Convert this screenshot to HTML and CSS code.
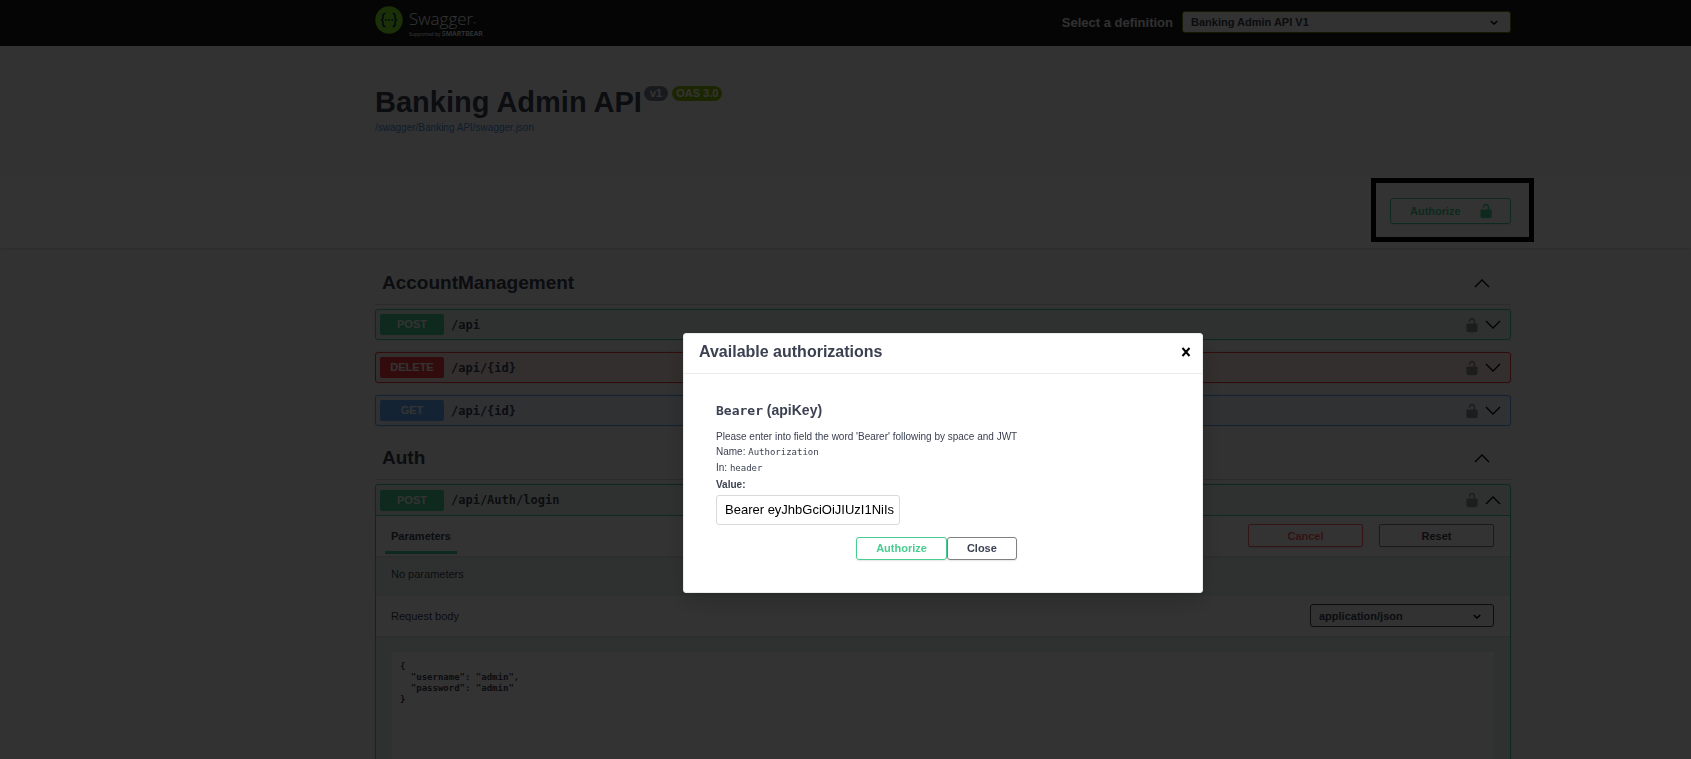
FILE: index.html
```html
<!DOCTYPE html>
<html lang="en">
<head>
<meta charset="utf-8">
<title>Swagger UI</title>
<link rel="stylesheet" href="styles.css">
</head>
<body>
<svg class="sprite" aria-hidden="true">
  <symbol id="unlocked" viewBox="0 0 20 20"><path d="M15.8 8H14V5.6C14 2.703 12.665 1 10 1 7.334 1 6 2.703 6 5.6V6h2v-.801C8 3.754 8.797 3 10 3c1.203 0 2 .754 2 2.199V8H4c-.553 0-1 .646-1 1.199V17c0 .549.428 1.139.951 1.307l1.197.387C5.672 18.861 6.55 19 7.1 19h5.8c.549 0 1.428-.139 1.951-.307l1.196-.387c.524-.167.953-.757.953-1.306V9.199C17 8.646 16.352 8 15.8 8z"/></symbol>
  <symbol id="down" viewBox="0 0 16 9"><path d="M1 1l7 7 7-7" fill="none" stroke="currentColor" stroke-width="1.3"/></symbol>
  <symbol id="up" viewBox="0 0 16 9"><path d="M1 8l7-7 7 7" fill="none" stroke="currentColor" stroke-width="1.3"/></symbol>
  <symbol id="caret" viewBox="0 0 10 6"><path d="M1 1l4 4 4-4" fill="none" stroke="currentColor" stroke-width="1.8"/></symbol>
</svg>

<header class="topbar">
  <div class="wrap topbar-row">
    <a class="logo" href="#">
      <svg class="logo-mark" viewBox="0 0 28 28" aria-hidden="true">
        <circle cx="14" cy="14" r="13.7" fill="#85ea2d"/>
        <path d="M10.5 7.5c-2 0-2.600.7-2.600 2.300v2c0 1.400-.6 2.200-2 2.200 1.400 0 2 .8 2 2.200v2c0 1.600.6 2.300 2.600 2.300M17.500 7.500c2 0 2.600.7 2.600 2.300v2c0 1.400.6 2.200 2 2.200-1.400 0-2 .8-2 2.200v2c0 1.600-.6 2.300-2.600 2.300" fill="none" stroke="#173647" stroke-width="1.700"/>
        <circle cx="10.700" cy="14" r="1" fill="#173647"/><circle cx="14" cy="14" r="1" fill="#173647"/><circle cx="17.300" cy="14" r="1" fill="#173647"/>
      </svg>
      <span class="logo-text">
        <span class="logo-name">Swagger<small>™</small></span>
        <span class="logo-by">Supported by <b>SMARTBEAR</b></span>
      </span>
    </a>
    <label class="definition-label" for="definition">Select a definition</label>
    <span class="select definition">
      <select id="definition"><option>Banking Admin API V1</option></select>
      <svg class="caret"><use href="#caret"/></svg>
    </span>
  </div>
</header>

<section class="info">
  <div class="wrap">
    <h1>Banking Admin API <span class="badges"><span class="badge">v1</span><span class="badge oas">OAS 3.0</span></span></h1>
    <a class="spec-link" href="#">/swagger/Banking API/swagger.json</a>
  </div>
</section>

<section class="schemes">
  <div class="wrap schemes-row">
    <button class="btn authorize">Authorize<svg class="lock"><use href="#unlocked"/></svg></button>
  </div>
</section>

<main>
  <div class="wrap">
  <section class="tag">
    <h2>AccountManagement<svg class="chevron"><use href="#up"/></svg></h2>
    <div class="op post"><div class="op-head"><span class="method">POST</span><code>/api</code><svg class="lock"><use href="#unlocked"/></svg><svg class="chevron"><use href="#down"/></svg></div></div>
    <div class="op delete"><div class="op-head"><span class="method">DELETE</span><code>/api/{id}</code><svg class="lock"><use href="#unlocked"/></svg><svg class="chevron"><use href="#down"/></svg></div></div>
    <div class="op get"><div class="op-head"><span class="method">GET</span><code>/api/{id}</code><svg class="lock"><use href="#unlocked"/></svg><svg class="chevron"><use href="#down"/></svg></div></div>
  </section>
  <section class="tag">
    <h2>Auth<svg class="chevron"><use href="#up"/></svg></h2>
    <div class="op post open">
      <div class="op-head"><span class="method">POST</span><code>/api/Auth/login</code><svg class="lock"><use href="#unlocked"/></svg><svg class="chevron"><use href="#up"/></svg></div>
      <div class="bar">
        <h3 class="tab">Parameters</h3>
        <button class="btn wide cancel">Cancel</button>
        <button class="btn wide reset">Reset</button>
      </div>
      <p class="no-params">No parameters</p>
      <div class="bar">
        <label class="body-label" for="content-type">Request body</label>
        <span class="select content-type">
          <select id="content-type"><option>application/json</option></select>
          <svg class="caret"><use href="#caret"/></svg>
        </span>
      </div>
      <div class="body-area">
        <textarea class="body-text" aria-label="Request body content" spellcheck="false">{
  "username": "admin",
  "password": "admin"
}</textarea>
      </div>
    </div>
  </section>
  </div>
</main>

<div class="highlight"></div>

<div class="backdrop">
  <div class="modal" role="dialog" aria-labelledby="modal-title">
    <div class="modal-head">
      <h3 id="modal-title">Available authorizations</h3>
      <button class="close" aria-label="Close dialog"><svg viewBox="0 0 10 10"><path d="M1.500 1l7 8M8.500 1l-7 8" stroke="#000" stroke-width="2"/></svg></button>
    </div>
    <form class="modal-body">
      <h4><code>Bearer</code> (apiKey)</h4>
      <p>Please enter into field the word 'Bearer' following by space and JWT</p>
      <p>Name: <code>Authorization</code></p>
      <p>In: <code>header</code></p>
      <label for="token">Value:</label>
      <input id="token" type="text" value="Bearer eyJhbGciOiJIUzI1NiIs">
      <div class="modal-actions">
        <button type="button" class="btn green">Authorize</button>
        <button type="button" class="btn">Close</button>
      </div>
    </form>
  </div>
</div>
</body>
</html>
```
FILE: styles.css
```css
* { box-sizing: border-box; }

body {
  --page-offset: 195px;
  display: flex;
  flex-direction: column;
  margin: 0;
  height: 100vh;
  overflow: hidden;
  background: #fafafa;
  color: #3b4151;
  font-family: "Liberation Sans", Arial, sans-serif;
  font-size: 11px;
}

h1, h2, h3, h4, p { margin: 0; }
code { font-family: "DejaVu Sans Mono", monospace; }
button, input, select, textarea { font: inherit; color: inherit; }
.sprite { display: none; }

.topbar, .info, .schemes, main { padding-left: var(--page-offset); }
.wrap { width: 100%; max-width: 1168px; margin: 0 auto; padding: 0 16px; }

/* top bar */
.topbar { background: #1b1b1b; }
.topbar-row { display: flex; align-items: center; height: 46px; padding-bottom: 2px; }
.logo { display: flex; gap: 6px; flex: 1; color: #fff; text-decoration: none; }
.logo-mark { width: 28px; height: 28px; }
.logo-text { display: flex; flex-direction: column; gap: 2px; padding-top: 4px; }
.logo-name { height: 18px; font: 300 17px/18px "Open Sans", sans-serif; }
.logo-name small { font-size: 4px; line-height: 4px; }
.logo-by { height: 8px; font: 5px/8px "Open Sans", sans-serif; }
.logo-by b { font-size: 7px; line-height: 8px; font-weight: 600; }
.definition-label { font-size: 13px; font-weight: 700; color: #f0f0f0; margin-right: 9px; }

.select { position: relative; display: block; }
.select select {
  display: block;
  width: 100%;
  appearance: none;
  border: 1px solid #41444e;
  border-radius: 3px;
  background: #f7f7f7;
  padding: 0 8px;
  font-weight: 700;
}
.caret { position: absolute; right: 13px; top: 50%; width: 8px; height: 5px; margin-top: -2px; color: #000; }
.definition { width: 329px; }
.definition select { height: 22px; border-color: #547f00; }

/* heading */
.info { padding-top: 37px; padding-bottom: 40px; }
.info h1 { display: flex; gap: 2px; font-size: 29px; line-height: 38px; }
.badges { display: flex; gap: 4px; align-self: flex-start; padding-top: 3px; }
.badge { height: 15px; border-radius: 8px; padding: 0 6px; background: #7d8492; color: #fff; font-size: 11px; line-height: 15px; }
.badge.oas { background: #89bf04; padding: 0 4px; }
.spec-link { display: block; font-size: 10px; line-height: 14px; color: #4990e2; text-decoration: none; }

/* authorize bar */
.schemes { background: #fff; box-shadow: 0 1px 2px rgba(0, 0, 0, .15); padding-top: 23px; padding-bottom: 24px; }
.schemes-row { display: flex; justify-content: flex-end; }
.lock { width: 16px; height: 16px; fill: currentColor; }
.btn {
  border: 1px solid #808080;
  border-radius: 3px;
  background: transparent;
  padding: 0 17px;
  font-size: 11px;
  font-weight: 700;
  box-shadow: 0 1px 2px rgba(0, 0, 0, .1);
}
.authorize { display: flex; align-items: center; justify-content: space-between; width: 121px; height: 26px; color: #49cc90; border-color: #49cc90; padding: 0 16px 0 19px; }

/* operations */
main { flex: 1; min-height: 0; overflow: hidden; padding-top: 17px; }
.chevron { width: 16px; height: 9px; color: #000; }
.tag { padding-bottom: 2px; }
.tag h2 {
  display: flex;
  align-items: center;
  justify-content: space-between;
  height: 40px;
  margin-bottom: 4px;
  padding: 0 21px 3px 7px;
  border-bottom: 1px solid #d5d6d9;
  font-size: 19px;
}
.op { --c: #49cc90; --bg: #ecf6f1; margin-bottom: 12px; border: 1px solid var(--c); border-radius: 3px; background: var(--bg); box-shadow: 0 0 2px rgba(0, 0, 0, .19); }
.op.delete { --c: #f93e3e; --bg: #feebeb; }
.op.get { --c: #61affe; --bg: #ebf3fb; }
.op-head { display: flex; align-items: center; height: 29px; padding: 0 9px 0 4px; }
.method { width: 64px; border-radius: 2px; background: var(--c); color: #fff; font-weight: 700; line-height: 21px; text-align: center; }
.op-head code { flex: 1; margin-left: 7px; font-size: 12px; font-weight: 700; }
.op-head .lock { color: #8f9297; margin-right: 5px; }
.open .op-head { border-bottom: 1px solid var(--c); height: 31px; }
.bar { display: flex; align-items: center; height: 40px; padding: 0 16px 1px 15px; background: #fff; box-shadow: 0 1px 2px rgba(0, 0, 0, .1); }
.tab { align-self: stretch; margin: 0 auto 1px -6px; padding: 0 6px; border-bottom: 3px solid #49cc90; font-size: 11px; line-height: 40px; height: 38px; }
.btn.wide { width: 115px; height: 23px; margin-left: 16px; border-radius: 2px; }
.btn.cancel { color: #ff6060; border-color: #ff6060; }
.no-params { height: 40px; padding: 0 15px; font-size: 11px; line-height: 36px; }
.body-label { font-size: 11px; margin-right: auto; }
.content-type { width: 184px; }
.content-type select { height: 23px; }
.body-area { padding: 16px; }
.body-text { display: block; width: 100%; height: 220px; resize: none; border: 0; border-radius: 3px; background: #fff; padding: 9px 8px; font: 700 9px/11px "DejaVu Sans Mono", monospace; }

/* marker drawn over the page */
.highlight { position: absolute; left: 1371px; top: 178px; width: 163px; height: 64px; border: 5px solid #000; }

/* dialog */
.backdrop {
  position: fixed;
  inset: 0;
  display: flex;
  align-items: center;
  justify-content: center;
  padding: 167px 0 0 var(--page-offset);
  background: rgba(0, 0, 0, .8);
}
.modal { width: 520px; border: 1px solid #ebebeb; border-radius: 3px; background: #fff; box-shadow: 0 8px 24px rgba(0, 0, 0, .2); }
.modal-head { display: flex; align-items: center; justify-content: space-between; height: 40px; padding: 0 11px 3px 15px; border-bottom: 1px solid #ebebeb; }
.modal-head h3 { font-size: 16px; }
.close { display: flex; padding: 0; border: 0; background: none; }
.close svg { width: 10px; height: 10px; }
.modal-body { padding: 26px 32px 32px; }
.modal-body h4 { margin-bottom: 8px; font-size: 14px; line-height: 20px; }
.modal-body h4 code { font-size: 13px; font-weight: 700; }
.modal-body p { font-size: 10px; line-height: 15px; }
.modal-body p code { font-size: 9px; }
.modal-body label { display: block; margin: 2px 0 3px; font-size: 10px; font-weight: 700; line-height: 14px; }
.modal-body input { display: block; width: 184px; height: 30px; border: 1px solid #d9d9d9; border-radius: 3px; padding: 0 4px 1px 8px; color: #000; font-size: 13px; }
.modal-actions { display: flex; justify-content: center; padding: 12px 13px 0 0; }
.modal-actions .btn { height: 23px; padding: 0 19px 1px; }
.modal-actions .green { color: #49cc90; border-color: #49cc90; }
```
